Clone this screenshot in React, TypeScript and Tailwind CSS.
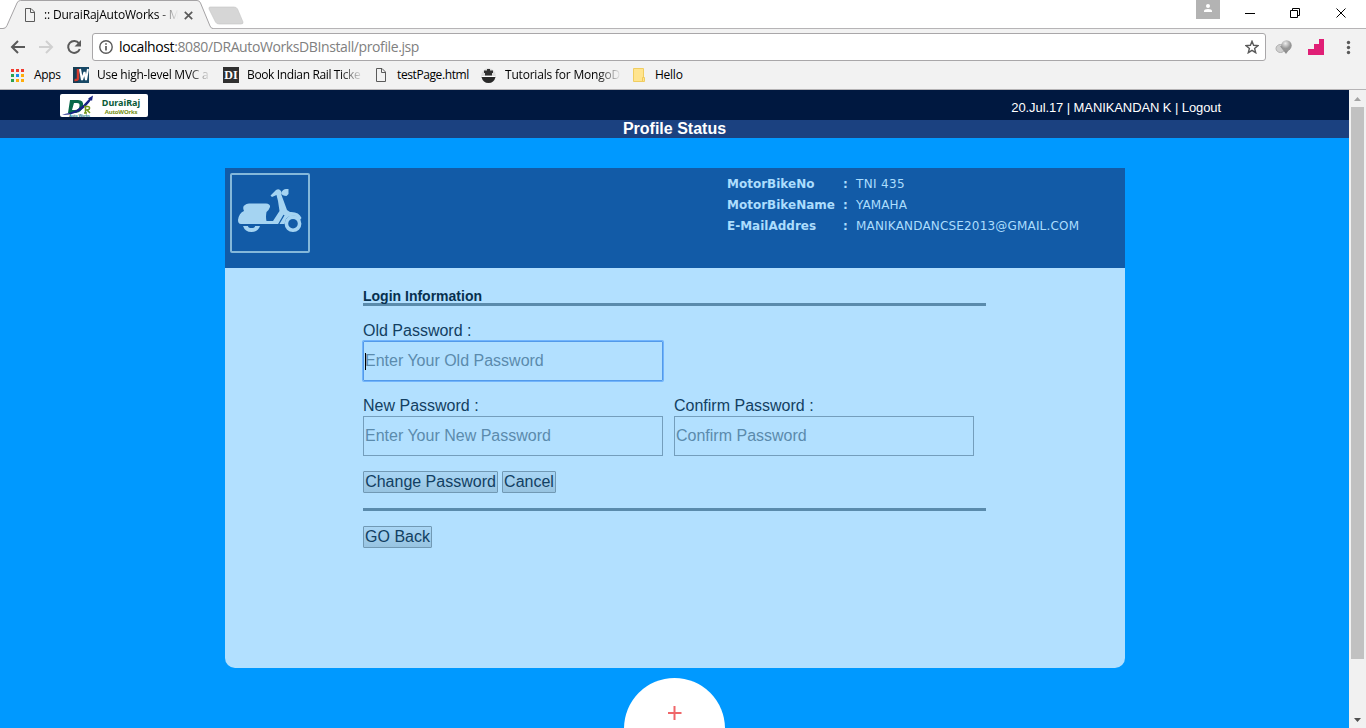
import React from "react";

const ui = "font-['Open_Sans','Noto_Sans',sans-serif]";
const arial = "font-['Liberation_Sans',Arial,sans-serif]";

function PageIcon() {
  return (
    <svg width="12" height="14" viewBox="0 0 12 14" fill="none" stroke="#5a5a5a" className="shrink-0">
      <path d="M1.500 .5h5.500l3.500 3.500v9.500H1.500zM6.500 .5V4.500h4" />
    </svg>
  );
}

function TabStrip() {
  return (
    <div className="relative flex h-[29px] shrink-0 bg-white">
      <svg width="1366" height="29" className="absolute inset-0" fill="none">
        <path d="M0 28.500H1366" stroke="#b6b4b6" />
        <path d="M0 28.500H3Q6 28.500 7 25.500L17 3Q18 .5 20.500 .5H197Q199.500 .5 200.500 3L210 26Q211 28.500 213 28.500V29H0z" fill="#f2f2f2" />
        <path d="M0 28.500H3Q6 28.500 7 25.500L17 3Q18 .5 20.500 .5H197Q199.500 .5 200.500 3L210 26Q211 28.500 213 28.500" stroke="#a5a3a5" />
        <path d="M210 7H234Q236.500 7 237.500 9L243 22Q243.500 24 241 24H219Q216.500 24 215.500 22L209 9Q208.500 7 210 7z" fill="#d6d6d6" stroke="#c4c4c4" strokeWidth=".6" />
        <rect x="1196" width="24" height="19" fill="#b3b3b3" />
        <circle cx="1208" cy="6" r="2" fill="#fff" />
        <path d="M1204 12V11Q1204 9 1208 9T1212 11V12z" fill="#fff" />
        <path d="M1245 13.500H1255M1290.500 10.500H1297.500V17.500H1290.500zM1292.500 10V8.500H1299.500V15.500H1298" stroke="#000" />
        <path d="M1336.500 8.500L1345.500 17.500M1345.500 8.500L1336.500 17.500" stroke="#000" />
      </svg>
      <div className="relative flex h-[29px] w-[210px] items-center pl-6">
        <PageIcon />
        <span className={`ml-[8px] w-[134px] overflow-hidden whitespace-nowrap bg-linear-to-r from-black from-85% to-transparent bg-clip-text text-[12px] tracking-[-0.18px] text-transparent ${ui}`}>:: DuraiRajAutoWorks - M</span>
        <svg width="9" height="9" viewBox="0 0 9 9" className="ml-[6px] mt-px" stroke="#5a5a5a" strokeWidth="1.700"><path d="M.8.8L8.200 8.200M8.200.8L.8 8.200" /></svg>
      </div>
    </div>
  );
}

function Toolbar() {
  return (
    <div className="flex h-[36px] shrink-0 items-center bg-[#f2f2f2]">
      <svg width="92" height="36" fill="none" stroke="#5a5a5a" strokeWidth="2" className="shrink-0">
        <path d="M25 18H12M18 12L12 18L18 24" />
        <path d="M39 18H52M46 12L52 18L46 24" stroke="#d0d0d0" />
        <path d="M79 14.300A6 6 0 1 0 79.800 20" />
        <path d="M81 11V17.500H74.500z" fill="#5a5a5a" stroke="none" />
      </svg>
      <div className="flex h-[28px] w-[1174px] shrink-0 items-center rounded-[3px] border border-[#a9a7a9] bg-white pl-[6px]">
        <svg width="14" height="14" viewBox="0 0 14 14" fill="none" stroke="#5a5a5a" strokeWidth="1.400"><circle cx="7" cy="7" r="6.200" /><path d="M7 6V10.500M7 3.300V4.800" strokeWidth="1.700" /></svg>
        <span className={`ml-[6px] whitespace-nowrap pb-px text-[14px] tracking-[-0.39px] text-[#808080] ${ui}`}><span className="text-black">localhost</span>:8080/DRAutoWorksDBInstall/profile.jsp</span>
        <svg width="14" height="14" viewBox="0 0 14 14" className="ml-auto mr-[6px]" fill="none" stroke="#5a5a5a" strokeWidth="1.400"><path d="M7 1.300L8.600 5.300L13 5.600L9.600 8.400L10.700 12.700L7 10.300L3.300 12.700L4.400 8.400L1 5.600L5.400 5.300z" /></svg>
      </div>
      <svg width="100" height="36" className="shrink-0">
        <defs>
          <radialGradient id="globe" cx=".4" cy=".3"><stop offset="0" stopColor="#eee" /><stop offset="1" stopColor="#969696" /></radialGradient>
        </defs>
        <ellipse cx="14.500" cy="19.500" rx="4.500" ry="4" fill="#cfcfcf" stroke="#b0b0b0" />
        <path d="M14 17L25 18L20 25z" fill="#8d8d8d" />
        <circle cx="20.500" cy="16.500" r="5.200" fill="url(#globe)" />
        <path d="M42 26V20H48V15H53V10H58V26z" fill="#e01f76" />
        <g fill="#5a5a5a"><circle cx="82.500" cy="13.500" r="1.700" /><circle cx="82.500" cy="18.500" r="1.700" /><circle cx="82.500" cy="23.500" r="1.700" /></g>
      </svg>
    </div>
  );
}

function AppsIcon() {
  const colors = ["#f23b30", "#f23b30", "#f23b30", "#2ca14f", "#1a8cf0", "#ffad0a", "#2ca14f", "#ffad0a", "#ffad0a"];
  return (
    <svg width="13" height="13" className="shrink-0">
      {colors.map((c, i) => <rect key={i} x={(i % 3) * 5} y={Math.floor(i / 3) * 5} width="3" height="3" fill={c} />)}
    </svg>
  );
}

function Bookmarks() {
  const text = `whitespace-nowrap text-[12px] text-black ${ui}`;
  const fade = `overflow-hidden whitespace-nowrap bg-linear-to-r from-black from-80% to-transparent bg-clip-text text-[12px] text-transparent ${ui}`;
  return (
    <div className="flex h-[25px] shrink-0 items-center border-b border-[#b6b4b6] bg-[#f2f2f2] pb-[4px] pl-[11px]">
      <div className="flex w-[62px] items-center gap-[10px]"><AppsIcon /><span className={`${text} tracking-[-0.3px]`}>Apps</span></div>
      <div className="flex w-[150px] items-center gap-[8px]">
        <svg width="16" height="16" className="shrink-0"><rect width="16" height="16" fill="#174866" /><path d="M0 0H7L5 16H0z" fill="#173d54" /><path d="M5 2V11Q5 13.500 1.500 13" fill="none" stroke="#d33a2d" strokeWidth="2.500" /><path d="M7 2L9 13L11.500 5L13 13L15 2" fill="none" stroke="#fff" strokeWidth="2" /></svg>
        <span className={`w-[114px] tracking-[-0.25px] ${fade}`}>Use high-level MVC a</span>
      </div>
      <div className="flex w-[152px] items-center gap-[8px]">
        <span className="flex h-4 w-4 shrink-0 items-center justify-center bg-[#303030] font-['Liberation_Serif',serif] text-[12px] font-bold leading-none text-white">DI</span>
        <span className={`w-[116px] tracking-[-0.37px] ${fade}`}>Book Indian Rail Ticke</span>
      </div>
      <div className="flex w-[106px] items-center gap-[10px]"><PageIcon /><span className={`${text} tracking-[-0.4px]`}>testPage.html</span></div>
      <div className="flex w-[152px] items-center gap-[9px]">
        <svg width="15" height="15" viewBox="0 0 15 15" className="shrink-0"><circle cx="7.500" cy="7.500" r="7.200" fill="#ddd" /><path d="M.5 9H14.500Q13 15 7.500 15T.5 9z" fill="#292929" /><path d="M3 2.500H6V1H9V2.500H12V5H11V7.500H4V5H3z" fill="#303030" /><path d="M1 8.500H14" stroke="#fff" /></svg>
        <span className={`w-[116px] tracking-[-0.2px] ${fade}`}>Tutorials for MongoD</span>
      </div>
      <div className="flex items-center gap-[10px]">
        <svg width="12" height="14"><path d="M.5.5H10.500V9.500H11.500V13.500H.5z" fill="#ffe48e" stroke="#f0cd60" /><path d="M9.500 13V9.500H11" fill="none" stroke="#f0c95a" /></svg>
        <span className={`${text} tracking-[-0.25px]`}>Hello</span>
      </div>
    </div>
  );
}

function Logo() {
  return (
    <div className="flex h-[23px] w-[88px] overflow-hidden rounded-[2px] bg-white">
      <svg width="36" height="23" viewBox="0 0 36 23" className="shrink-0">
        <path fillRule="evenodd" d="M10 6H18Q24 6 23 12Q22 18 16 19H8zM14 9L12 16H15Q19 16 19.500 12Q20 9 17 9z" fill="#08684a" />
        <path d="M2 20.500Q18 19 29 5L28 4.500L33 1.500L32 7L31 6Q20 22 2 20.500z" fill="#172285" />
        <path d="M25.500 12.500V19M24 19H27M24 12.500H27.500Q30 12.500 29.500 14.500Q29 16 26 16M27 16L30 19" fill="none" stroke="#719719" strokeWidth="1.500" />
        <text x="9" y="22.500" fontSize="4" textLength="21" fontWeight="bold" fontFamily="Liberation Sans" fill="#287d86">Auto Works</text>
      </svg>
      <div className="flex w-[50px] flex-col items-center pt-[3px] font-bold font-['Noto_Sans','Open_Sans',sans-serif]">
        <span className="text-[9px] leading-[12px] text-[#095b37]">DuraiRaj</span>
        <span className="text-[6px] leading-[7px] tracking-[-0.2px] text-[#759116]">AutoWOrks</span>
      </div>
    </div>
  );
}

function Scooter() {
  return (
    <div className="h-[80px] w-[80px] rounded-[2px] border-2 border-[#84b8da]">
      <svg width="76" height="76" viewBox="0 0 76 76" fill="#a5d4f2">
        <path d="M13 30Q14 28.500 17 28.500H34Q38.500 29 38 32Q37 35 34.500 37Q33.500 42 34.500 46H41L47.500 36L46 26L44.500 20L40 22L38.500 20.500L44 15Q47 13 49 16L49.500 20L55 35L58 37Q67 36.500 69.500 43L68 45L64 41Q57 40 54 44L52.500 49H9Q6 49 6 45Q7 38 12 36Q10 31 13 30z" />
        <path d="M49 18Q51 14 54 14H56.500V19L54.500 21Q50 21 49 18z" />
        <circle cx="61" cy="48.700" r="6.600" fill="none" stroke="#a5d4f2" strokeWidth="3.600" />
        <path d="M11 51H28Q26 57 19.500 57T11 51z" />
        <path d="M16 51H23Q23 53 19.500 53T16 51z" fill="#125ba7" />
        <path d="M52 40L46.500 49.500" stroke="#125ba7" strokeWidth="1.300" />
      </svg>
    </div>
  );
}

function InfoRow({ label, value, track }: { label: string; value: string; track: string }) {
  return (
    <div className="flex h-[21px] items-center font-['DejaVu_Sans',sans-serif] text-[12px] text-[#acddfd]">
      <span className="w-[116px] whitespace-nowrap font-bold">{label}</span>
      <span className="w-[13px] font-bold">:</span>
      <span className={`whitespace-nowrap ${track}`}>{value}</span>
    </div>
  );
}

function Field({ label, placeholder, focused }: { label: string; placeholder: string; focused?: boolean }) {
  return (
    <div className="w-[300px] text-[16px] text-[#123f62]">
      <label className="block h-[20px] leading-[20px]">{label}</label>
      <div className={`relative flex h-[40px] items-center border pb-px pl-px ${focused ? "rounded-[1px] border-[#539aea] shadow-[0_0_0_1px_#71b4fc]" : "border-[#749ebc]"}`}>
        {focused && <span className="absolute left-px top-[11px] h-[17px] w-px bg-black" />}
        <span className="whitespace-nowrap text-[#5b8bad]">{placeholder}</span>
      </div>
    </div>
  );
}

function FormButton({ children, width }: { children: React.ReactNode; width: string }) {
  return <button className={`block h-[22px] whitespace-nowrap rounded-[1px] border border-[#7199b4] bg-linear-to-b from-[#a9d6f5] to-[#98c4e1] text-center text-[16px] leading-[18px] text-[#123f62] ${width}`}>{children}</button>;
}

function Card() {
  return (
    <section className="ml-[225px] mt-[30px] h-[500px] w-[900px] overflow-hidden rounded-b-[10px] bg-[#b2e0ff]">
      <div className="flex h-[100px] justify-between bg-[#125ba7] pl-[5px] pt-[5px]">
        <Scooter />
        <div className="w-[398px]">
          <InfoRow label="MotorBikeNo" value="TNI 435" track="tracking-[0.35px]" />
          <InfoRow label="MotorBikeName" value="YAMAHA" track="tracking-[0.1px]" />
          <InfoRow label="E-MailAddres" value="MANIKANDANCSE2013@GMAIL.COM" track="tracking-[0.18px]" />
        </div>
      </div>
      <div className="ml-[138px] w-[623px] pt-[20px]">
        <h2 className="h-[18px] border-b-[3px] border-[#5a8bac] text-[14px] font-bold leading-[16px] text-[#07304f]">Login Information</h2>
        <div className="pt-[15px]"><Field label="Old Password :" placeholder="Enter Your Old Password" focused /></div>
        <div className="flex gap-[11px] pt-[15px]">
          <Field label="New Password :" placeholder="Enter Your New Password" />
          <Field label="Confirm Password :" placeholder="Confirm Password" />
        </div>
        <div className="flex gap-1 pt-[15px]">
          <FormButton width="w-[135px]">Change Password</FormButton>
          <FormButton width="w-[54px]">Cancel</FormButton>
        </div>
        <div className="mb-[15px] mt-[15px] h-[3px] bg-[#5a8bac]" />
        <FormButton width="w-[69px]">GO Back</FormButton>
      </div>
    </section>
  );
}

export default function App() {
  return (
    <div className={`flex h-[728px] w-[1366px] flex-col overflow-hidden ${arial}`}>
      <TabStrip />
      <Toolbar />
      <Bookmarks />
      <div className="flex h-[638px] shrink-0">
        <main className="h-[638px] w-[1349px] overflow-hidden bg-[#0099ff]">
          <header className="flex h-[30px] justify-between bg-[#001840] pl-[60px] pr-[128px] pt-[4px]">
            <Logo />
            <span className="whitespace-nowrap pt-[5px] text-[13px] leading-[18px] tracking-[-0.09px] text-white">20.Jul.17 | MANIKANDAN K | Logout</span>
          </header>
          <h1 className="h-[18px] bg-[#1b4180] text-center text-[16px] font-bold leading-[17px] text-white">Profile Status</h1>
          <Card />
          <div className="mx-auto mt-[10px] h-[101px] w-[101px] rounded-full bg-white pt-[28px]">
            <svg width="14" height="14" viewBox="0 0 14 14" className="mx-auto" stroke="#ef6669" strokeWidth="2"><path d="M6.500 0V14M0 7H13.500" /></svg>
          </div>
        </main>
        <aside className="flex w-[17px] flex-col items-center bg-[#f1f1f1]">
          <svg width="17" height="17"><path d="M5 11L8.500 7L12 11z" fill="#a3a3a3" /></svg>
          <div className="h-[552px] w-[13px] bg-[#c1c1c1]" />
          <svg width="17" height="17" className="mt-auto"><path d="M5 7L8.500 11L12 7z" fill="#505050" /></svg>
        </aside>
      </div>
    </div>
  );
}
